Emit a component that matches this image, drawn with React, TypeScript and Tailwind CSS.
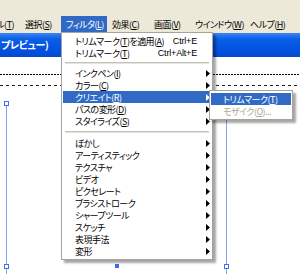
import React from "react";

const jp = "font-['Noto_Sans_CJK_JP',sans-serif] [font-feature-settings:'palt']";

const K = ({ k }: { k: string }) => (
  <>
    (<span className="underline underline-offset-[1px]">{k}</span>)
  </>
);

const Arrow = ({ white }: { white?: boolean }) => (
  <svg width="4" height="7" viewBox="0 0 4 7" className="block">
    <path d="M0 0 L4 3.5 L0 7 Z" fill={white ? "#ffffff" : "#000000"} />
  </svg>
);

type Item = { label: React.ReactNode; shortcut?: string; sub?: boolean; active?: boolean };

const groups: Item[][] = [
  [
    { label: <>トリムマーク<K k="T" />を適用<K k="A" /></>, shortcut: "Ctrl+E" },
    { label: <>トリムマーク<K k="T" /></>, shortcut: "Ctrl+Alt+E" },
  ],
  [
    { label: <>インクペン<K k="I" /></>, sub: true },
    { label: <>カラー<K k="C" /></>, sub: true },
    { label: <>クリエイト<K k="R" /></>, sub: true, active: true },
    { label: <>パスの変形<K k="D" /></>, sub: true },
    { label: <>スタイライズ<K k="S" /></>, sub: true },
  ],
  [
    { label: "ぼかし", sub: true },
    { label: "アーティスティック", sub: true },
    { label: "テクスチャ", sub: true },
    { label: "ビデオ", sub: true },
    { label: "ピクセレート", sub: true },
    { label: "ブラシストローク", sub: true },
    { label: "シャープツール", sub: true },
    { label: "スケッチ", sub: true },
    { label: "表現手法", sub: true },
    { label: "変形", sub: true },
  ],
];

const menuBar = [
  { label: <>選択<K k="S" /></>, w: "w-[41px]" },
  { label: <>フィルタ<K k="L" /></>, w: "w-[46px]", open: true },
  { label: <>効果<K k="C" /></>, w: "w-[42px]" },
  { label: <>画面<K k="V" /></>, w: "w-[41px]" },
  { label: <>ウインドウ<K k="W" /></>, w: "w-[55px]" },
  { label: <>ヘルプ<K k="H" /></>, w: "w-[45px]" },
];

function Row({ item }: { item: Item }) {
  return (
    <div
      className={`flex items-center h-[12px] pl-[12px] ${
        item.active ? "bg-[#316ac5] text-white" : "text-black"
      }`}
    >
      <span className="flex-1 whitespace-nowrap tracking-[-0.06em]">{item.label}</span>
      {item.shortcut && (
        <span className="whitespace-nowrap font-['Liberation_Sans',sans-serif] tracking-[-0.02em]">
          {item.shortcut}
        </span>
      )}
      <span className="w-[14px] flex justify-end pr-[1px]">{item.sub && <Arrow white={item.active} />}</span>
    </div>
  );
}

function Separator({ h }: { h: string }) {
  return (
    <div className={`${h} flex items-center px-[2px]`}>
      <div className="w-full h-[2px] border-t border-[#c5c2b8] bg-[#e6e4dc]" />
    </div>
  );
}

export default function App() {
  return (
    <div className={`relative w-[300px] h-[274px] overflow-hidden bg-white flex flex-col text-[9px] leading-none ${jp}`}>
      {/* menu bar */}
      <div className="h-[33px] bg-[#ece9d8] flex items-end pb-[1px]">
        <div className="w-[20px] h-[16px] flex items-center justify-end pr-[6px] whitespace-nowrap">
          <span className="tracking-[-0.06em]">ル<K k="T" /></span>
        </div>
        {menuBar.map((m, i) => (
          <div
            key={i}
            className={`${m.w} h-[16px] flex items-center pl-[5px] whitespace-nowrap tracking-[-0.06em] ${
              m.open ? "bg-[#316ac5] text-white" : "text-black"
            }`}
          >
            {m.label}
          </div>
        ))}
      </div>

      {/* document title */}
      <div className="h-[24px] bg-[linear-gradient(#3d85f5_0%,#0a5fe6_25%,#0554e3_60%,#0449d0_100%)] flex items-center pl-[1px]">
        <span className="text-white font-bold text-[10px] tracking-[-0.04em]">プレビュー)</span>
      </div>

      {/* document area */}
      <div className="relative flex-1 bg-white">
        <div className="absolute left-0 right-0 top-[17px] h-px bg-[repeating-linear-gradient(90deg,#000_0_2px,transparent_2px_3px)]" />
        <div className="absolute left-0 right-0 top-[28px] h-px bg-[repeating-linear-gradient(90deg,#222_0_3px,transparent_3px_6px)]" />
        <div className="absolute left-[6px] top-[46px] bottom-0 w-px bg-[#7ea2f4]" />
        <div className="absolute left-[226px] top-[46px] bottom-0 w-px bg-[#7ea2f4]" />
        <div className="absolute left-[4px] top-[44px] w-[5px] h-[5px] border border-[#3f6fe8] bg-white" />
        <div className="absolute left-[224px] top-[44px] w-[5px] h-[5px] border border-[#3f6fe8] bg-white" />
        <div className="absolute left-[4px] top-[207px] w-[5px] h-[5px] border border-[#3f6fe8] bg-white" />
        <div className="absolute left-[224px] top-[207px] w-[5px] h-[5px] border border-[#3f6fe8] bg-white" />
        <div className="absolute left-[115px] top-[207px] w-[4px] h-[4px] bg-[#3f6fe8]" />
      </div>

      {/* filter menu */}
      <div className="absolute left-[61px] top-[32px] w-[152px] bg-white border border-[#a7a496] py-[2px] px-px shadow-[3px_3px_2px_rgba(0,0,0,0.35)]">
        {groups.map((g, gi) => (
          <div key={gi}>
            {gi === 1 && <Separator h="h-[8px]" />}
            {gi === 2 && <Separator h="h-[10px]" />}
            {g.map((it, ii) => (
              <Row key={ii} item={it} />
            ))}
          </div>
        ))}
      </div>

      {/* create submenu */}
      <div className="absolute left-[209px] top-[90px] w-[84px] bg-white border border-[#a7a496] py-[2px] px-px shadow-[3px_3px_2px_rgba(0,0,0,0.35)]">
        <div className="h-[12px] flex items-center pl-[12px] bg-[#316ac5] text-white whitespace-nowrap tracking-[-0.06em]">
          トリムマーク<K k="T" />
        </div>
        <div className="h-[12px] flex items-center pl-[12px] text-[#aca899] whitespace-nowrap tracking-[-0.06em]">
          モザイク<K k="O" />...
        </div>
      </div>
    </div>
  );
}
